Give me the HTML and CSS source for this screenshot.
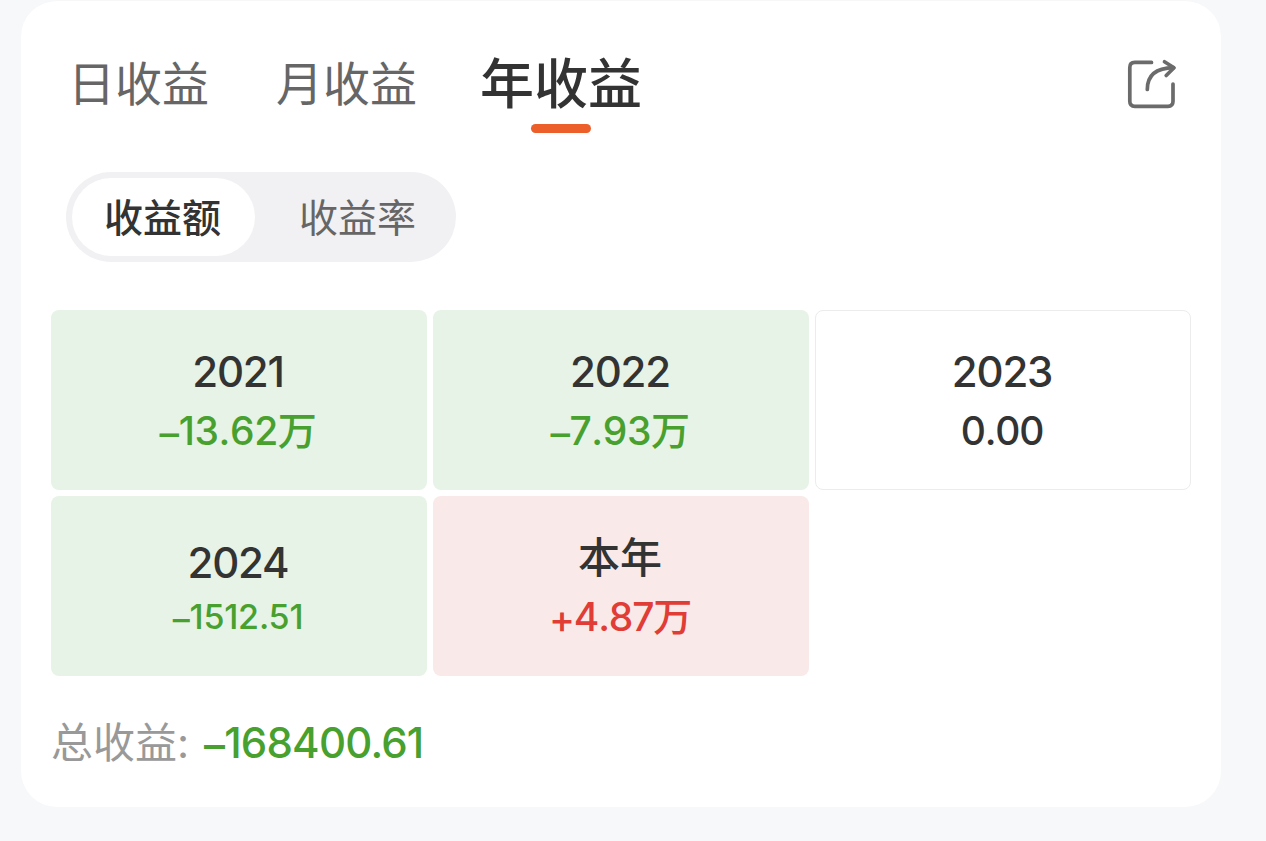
FILE: index.html
```html
<!DOCTYPE html>
<html lang="zh-CN">
<head>
<meta charset="utf-8">
<title>年收益</title>
<link rel="stylesheet" href="styles.css">
</head>
<body>
<main class="card">
  <header class="header">
    <nav class="tabs">
      <a class="tab tab-day">日收益</a>
      <a class="tab tab-month">月收益</a>
      <a class="tab active">年收益</a>
    </nav>
    <svg class="share" viewBox="0 0 52 52" width="52" height="52" fill="none" stroke="#6b6b6b" stroke-width="3.7" stroke-linecap="round" stroke-linejoin="round">
      <path d="M26.5 4.400H9.800Q4.800 4.400 4.800 9.400V43.300Q4.800 48.300 9.800 48.300H43Q48 48.300 48 43.300V26"/>
      <path d="M22.300 31.500C22.300 17 31 10 48.500 9.700"/>
      <path d="M39.500 3.800L49 9.700L41.200 17.500"/>
    </svg>
  </header>
  <div class="switch">
    <span class="option selected">收益额</span>
    <span class="option">收益率</span>
  </div>
  <section class="grid">
    <div class="cell loss"><b class="year">2021</b><span class="value"><span class="sign">–</span>13.62万</span></div>
    <div class="cell loss"><b class="year">2022</b><span class="value"><span class="sign">–</span>7.93万</span></div>
    <div class="cell flat"><b class="year">2023</b><span class="value">0.00</span></div>
    <div class="cell loss compact"><b class="year">2024</b><span class="value"><span class="sign">–</span>1512.51</span></div>
    <div class="cell gain"><b class="year">本年</b><span class="value"><span class="sign">+</span>4.87万</span></div>
  </section>
  <footer class="total"><span class="total-label">总收益:</span><span class="total-value"><span class="sign">–</span>168400.61</span></footer>
</main>
</body>
</html>
```
FILE: styles.css
```css
* { box-sizing: border-box; }
body {
  margin: 0;
  height: 841px;
  overflow: hidden;
  background: #f7f8fa;
  color: #333;
  font-family: Inter, "Noto Sans CJK SC", sans-serif;
}
.card {
  width: 1200px;
  height: 807px;
  margin-left: 21px;
  padding: 0 30px;
  background: #fff;
  border-top: 1px solid #f7f7f8;
  border-radius: 36px;
}
.header {
  display: flex;
  justify-content: space-between;
  height: 171px;
  padding: 48px 14px 0 17px;
}
.tabs { display: flex; }
.tab {
  height: 72px;
  font-size: 47px;
  line-height: 69px;
  color: #666;
  white-space: nowrap;
}
.tab-day { width: 208px; }
.tab-month { width: 204px; }
.active {
  position: relative;
  color: #333;
  font-size: 54px;
  line-height: 72px;
  font-weight: 500;
}
.active::after {
  content: "";
  position: absolute;
  left: 51px;
  top: 75px;
  width: 60px;
  height: 9px;
  border-radius: 5px;
  background: #ed5f2a;
}
.share { margin-top: 9px; }
.switch {
  display: flex;
  width: 390px;
  height: 90px;
  margin-left: 15px;
  padding: 6px;
  gap: 12px;
  border-radius: 45px;
  background: #f1f1f3;
}
.option {
  width: 183px;
  height: 78px;
  padding-right: 2px;
  border-radius: 39px;
  text-align: center;
  font-size: 39px;
  line-height: 79px;
  color: #666;
}
.selected { background: #fff; color: #333; font-weight: 500; }
.grid {
  display: grid;
  grid-template-columns: repeat(3, 376px);
  grid-auto-rows: 180px;
  gap: 6px;
  margin-top: 48px;
}
.cell {
  display: flex;
  flex-direction: column;
  align-items: center;
  padding: 32px 2px 0 0;
  border-radius: 8px;
}
.year { font-size: 42px; line-height: 60px; font-weight: 500; letter-spacing: -1.2px; }
.value { font-size: 39px; line-height: 58px; font-weight: 500; letter-spacing: -0.4px; font-kerning: none; }
.sign { display: inline-block; line-height: 1; vertical-align: -2px; }
.compact { padding-top: 37px; }
.compact .value { font-size: 34px; line-height: 48px; letter-spacing: -0.2px; font-kerning: auto; }
.loss { background: #e7f3e6; }
.loss .value, .total-value { color: #48a02e; }
.gain { background: #f9e9e9; }
.gain .value { color: #df3d36; letter-spacing: -1.2px; }
.gain .year { letter-spacing: 0; }
.flat { border: 1px solid #ececee; padding-top: 31px; }
.flat .value { letter-spacing: -1.2px; }
.total { display: flex; margin-top: 35px; font-size: 42px; line-height: 64px; }
.total-label { width: 153px; color: #999; }
.total-value { font-weight: 500; letter-spacing: -0.8px; }
```
